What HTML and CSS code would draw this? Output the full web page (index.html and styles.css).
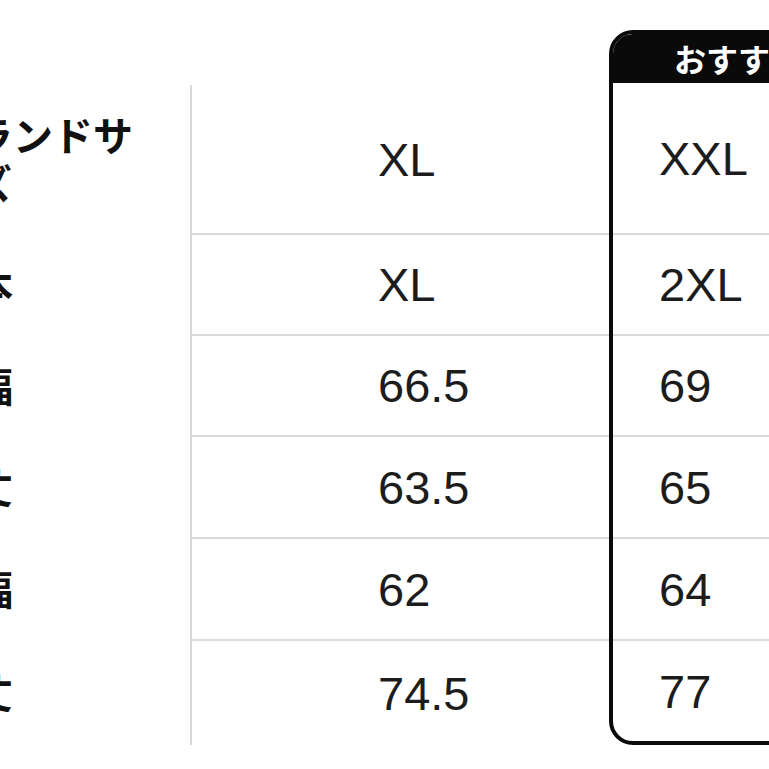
FILE: index.html
```html
<!DOCTYPE html>
<html lang="ja">
<head>
<meta charset="utf-8">
<link rel="stylesheet" href="styles.css">
</head>
<body>
<div class="chart">
  <div class="col labels">
    <div class="cell r1"><div class="lbl">ブランドサ<br>イズ</div></div>
    <div class="cell r2"><div class="lbl">日本</div></div>
    <div class="cell r3"><div class="lbl">身幅</div></div>
    <div class="cell r4"><div class="lbl">着丈</div></div>
    <div class="cell r5"><div class="lbl">肩幅</div></div>
    <div class="cell r6"><div class="lbl">袖丈</div></div>
  </div>
  <div class="col main">
    <div class="cell r1 line">XL</div>
    <div class="cell r2 line">XL</div>
    <div class="cell r3 line">66.5</div>
    <div class="cell r4 line">63.5</div>
    <div class="cell r5 line">62</div>
    <div class="cell r6">74.5</div>
  </div>
  <div class="col rec">
    <div class="rec-head">おすすめ</div>
    <div class="cell rr1 line">XXL</div>
    <div class="cell r2 line">2XL</div>
    <div class="cell r3 line">69</div>
    <div class="cell r4 line">65</div>
    <div class="cell r5 line">64</div>
    <div class="cell rr6">77</div>
  </div>
</div>
</body>
</html>
```
FILE: styles.css
```css
html, body {
  margin: 0;
  padding: 0;
  background: #ffffff;
  overflow: hidden;
}

.chart {
  display: flex;
  align-items: flex-start;
  width: 1100px;
  padding-top: 30px;
  font-family: "Liberation Sans", Arial, "Noto Sans CJK JP", sans-serif;
  color: #1c1c1c;
}

.col {
  flex: none;
  display: flex;
  flex-direction: column;
}

.cell {
  box-sizing: border-box;
  display: flex;
  align-items: center;
  font-size: 47px;
}

.line {
  border-bottom: 2px solid #dadada;
}

.r1 { height: 150px; }
.r2 { height: 101px; }
.r3 { height: 101px; }
.r4 { height: 102px; }
.r5 { height: 102px; }
.r6 { height: 104px; }
.rr1 { height: 152px; }
.rr6 { height: 100px; }

.labels {
  width: 190px;
  margin-top: 55px;
  overflow: hidden;
}

.lbl {
  margin-left: -67px;
  margin-top: -4px;
  white-space: nowrap;
  font-family: "Noto Sans CJK JP", sans-serif;
  font-weight: 700;
  font-size: 40px;
  line-height: 48px;
  color: #111;
}

.main {
  width: 417px;
  margin-top: 55px;
  border-left: 2px solid #dadada;
}

.main .cell {
  padding-left: 186px;
}

.rec {
  width: 258px;
  box-sizing: border-box;
  border: 4px solid #0a0a0a;
  border-radius: 24px;
  overflow: hidden;
}

.rec .cell {
  padding-left: 46px;
}

.rec-head {
  height: 49px;
  background: #0a0a0a;
  color: #fff;
  display: flex;
  align-items: center;
  justify-content: center;
  font-family: "Noto Sans CJK JP", sans-serif;
  font-weight: 700;
  font-size: 32px;
  padding-bottom: 2px;
  box-sizing: border-box;
}
```
